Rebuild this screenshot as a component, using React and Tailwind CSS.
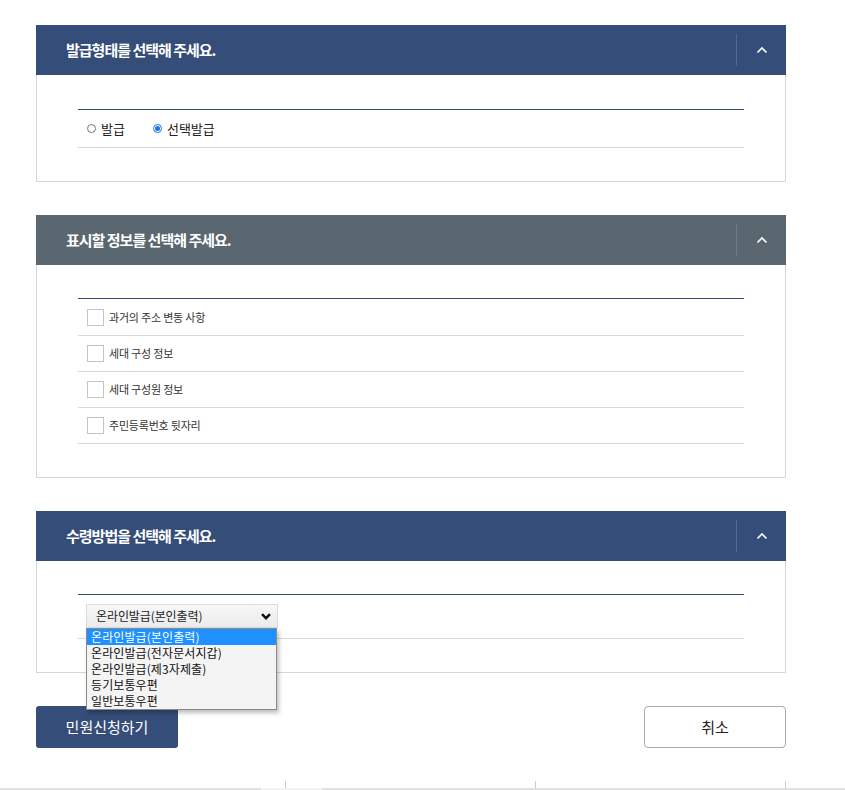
import { useState } from 'react'

const font = { fontFamily: '"Noto Sans CJK KR", "Noto Sans", sans-serif' }

function Chevron() {
  return (
    <svg width="12" height="8" viewBox="0 0 12 8" fill="none">
      <path d="M1.5 6.5 L6 2 L10.5 6.5" stroke="white" strokeWidth="1.6" />
    </svg>
  )
}

function Panel({ title, color, top = 'pt-[33px]', children }) {
  return (
    <section className="w-[750px]">
      <div className={`h-[50px] flex items-center ${color}`}>
        <h2 className="flex-1 pl-[30px] text-[15px] font-bold text-white tracking-[-1px]">{title}</h2>
        <div className="h-[32px] border-l border-white/15" />
        <button className="w-[49px] h-full flex items-center justify-center">
          <Chevron />
        </button>
      </div>
      <div className={`border border-t-0 border-[#d6d6d6] px-[41px] pb-[33px] ${top}`}>
        <div className="border-t border-[#34497a]">{children}</div>
      </div>
    </section>
  )
}

const infoItems = ['과거의 주소 변동 사항', '세대 구성 정보', '세대 구성원 정보', '주민등록번호 뒷자리']
const methods = ['온라인발급(본인출력)', '온라인발급(전자문서지갑)', '온라인발급(제3자제출)', '등기보통우편', '일반보통우편']

export default function App() {
  const [kind, setKind] = useState('select')

  return (
    <div className="min-h-screen bg-white pt-[25px]" style={font}>
      <div className="pl-[36px] flex flex-col gap-[33px]">
        {/* 발급형태 */}
        <Panel title="발급형태를 선택해 주세요." color="bg-[#354d79]" top="pt-[34px]">
          <div className="h-[38px] flex items-center gap-[28px] pl-[9px] border-b border-[#d9d9d9] text-[13px] text-[#222]">
            <label className="flex items-center gap-[5px]" onClick={() => setKind('issue')}>
              <span className={`w-[9px] h-[9px] rounded-full border ${kind === 'issue' ? 'border-[#1a73e8] bg-[#1a73e8]' : 'border-[#777]'}`} />
              발급
            </label>
            <label className="flex items-center gap-[5px]" onClick={() => setKind('select')}>
              <span className={`w-[9px] h-[9px] rounded-full flex items-center justify-center border ${kind === 'select' ? 'border-[#1a73e8]' : 'border-[#777]'}`}>
                {kind === 'select' && <span className="w-[5px] h-[5px] rounded-full bg-[#1a73e8]" />}
              </span>
              선택발급
            </label>
          </div>
        </Panel>

        {/* 표시할 정보 */}
        <Panel title="표시할 정보를 선택해 주세요." color="bg-[#5a6770]">
          {infoItems.map((item) => (
            <label key={item} className="h-[36px] first:h-[37px] flex items-center gap-[5px] pl-[9px] border-b border-[#d9d9d9] text-[11px] text-[#333] tracking-[-0.2px]">
              <span className="w-[17px] h-[17px] border border-[#c4c4c4] bg-white" />
              {item}
            </label>
          ))}
        </Panel>

        {/* 수령방법 */}
        <Panel title="수령방법을 선택해 주세요." color="bg-[#354d79]">
          <div className="h-[44px] pt-[9px] pl-[8px] border-b border-[#d9d9d9]">
            <div className="relative w-[192px]">
              <div className="h-[24px] flex items-center justify-between pl-[9px] pr-[6px] border border-[#dcdcdc] bg-gradient-to-b from-[#f7f7f7] to-[#ebebeb] text-[12px] text-[#222] tracking-[-0.1px]">
                {methods[0]}
                <svg width="10" height="7" viewBox="0 0 10 7" fill="none">
                  <path d="M1 1.2 L5 5.2 L9 1.2" stroke="#111" strokeWidth="2.4" />
                </svg>
              </div>
              <ul className="absolute left-0 top-[24px] w-[191px] bg-[#f4f4f4] border border-[#8a8a8a] shadow-[2px_3px_4px_rgba(0,0,0,0.25)] text-[12px] text-[#111] tracking-[0.1px] z-10">
                {methods.map((m, i) => (
                  <li key={m} className={`h-[16px] leading-[16px] pl-[4px] ${i === 0 ? 'bg-[#1e90ff] text-white' : ''}`}>{m}</li>
                ))}
              </ul>
            </div>
          </div>
        </Panel>

        <div className="w-[750px] flex justify-between">
          <button className="w-[142px] h-[42px] rounded-[3px] bg-[#354d79] text-white text-[15px]">민원신청하기</button>
          <button className="w-[142px] h-[42px] rounded-[4px] border border-[#aaa] bg-white text-[#222] text-[15px]">취소</button>
        </div>
      </div>

      <div className="mt-[33px] pl-[36px] flex">
        <div className="w-[250px] h-[7px] border-r border-[#ccc]" />
        <div className="w-[250px] h-[7px] border-r border-[#ccc]" />
        <div className="w-[250px] h-[7px] border-r border-[#ccc]" />
      </div>
      <div className="h-[2px] bg-[#e1e1e1] flex">
        <div className="ml-[261px] w-[61px] bg-[#f3f3f3]" />
      </div>
    </div>
  )
}
